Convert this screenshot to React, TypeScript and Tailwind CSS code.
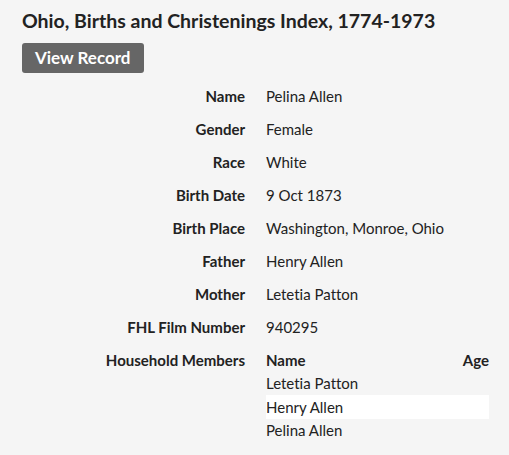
import React from 'react';

const fields = [
  { label: 'Name', value: 'Pelina Allen' },
  { label: 'Gender', value: 'Female' },
  { label: 'Race', value: 'White' },
  { label: 'Birth Date', value: '9 Oct 1873' },
  { label: 'Birth Place', value: 'Washington, Monroe, Ohio' },
  { label: 'Father', value: 'Henry Allen' },
  { label: 'Mother', value: 'Letetia Patton' },
  { label: 'FHL Film Number', value: '940295' },
];

const members = [
  { name: 'Letetia Patton', age: '' },
  { name: 'Henry Allen', age: '' },
  { name: 'Pelina Allen', age: '' },
];

const App: React.FC = () => {
  return (
    <div className="min-h-screen bg-[#f5f5f5] text-[#222] pl-[22px] pr-[20px] pt-[6px] font-['Lato','Liberation_Sans',sans-serif] [font-variant-ligatures:none]">
      <h1 className="text-[19.5px] font-bold leading-[29px]">Ohio, Births and Christenings Index, 1774-1973</h1>
      <button className="mt-[8px] h-[30px] px-[13px] rounded-[3px] bg-[#666] text-white text-[17px] font-bold">
        View Record
      </button>

      <div className="mt-[6px]">
        {fields.map(f => (
          <div key={f.label} className="flex py-[5.5px] text-[15px] leading-[22px]">
            <div className="w-[223px] shrink-0 text-right font-bold">{f.label}</div>
            <div className="ml-[21px]">{f.value}</div>
          </div>
        ))}
        <div className="flex pt-[5.5px] text-[15px] leading-[22px]">
          <div className="w-[223px] shrink-0 text-right font-bold">Household Members</div>
          <div className="ml-[21px] flex-1">
            <div className="flex justify-between font-bold h-[23px]">
              <span>Name</span>
              <span>Age</span>
            </div>
            {members.map((m, i) => (
              <div
                key={m.name}
                className={`flex justify-between h-[23.5px] items-center ${i === 1 ? 'bg-white' : ''}`}
              >
                <span>{m.name}</span>
                <span>{m.age}</span>
              </div>
            ))}
          </div>
        </div>
      </div>
    </div>
  );
};

export default App;
